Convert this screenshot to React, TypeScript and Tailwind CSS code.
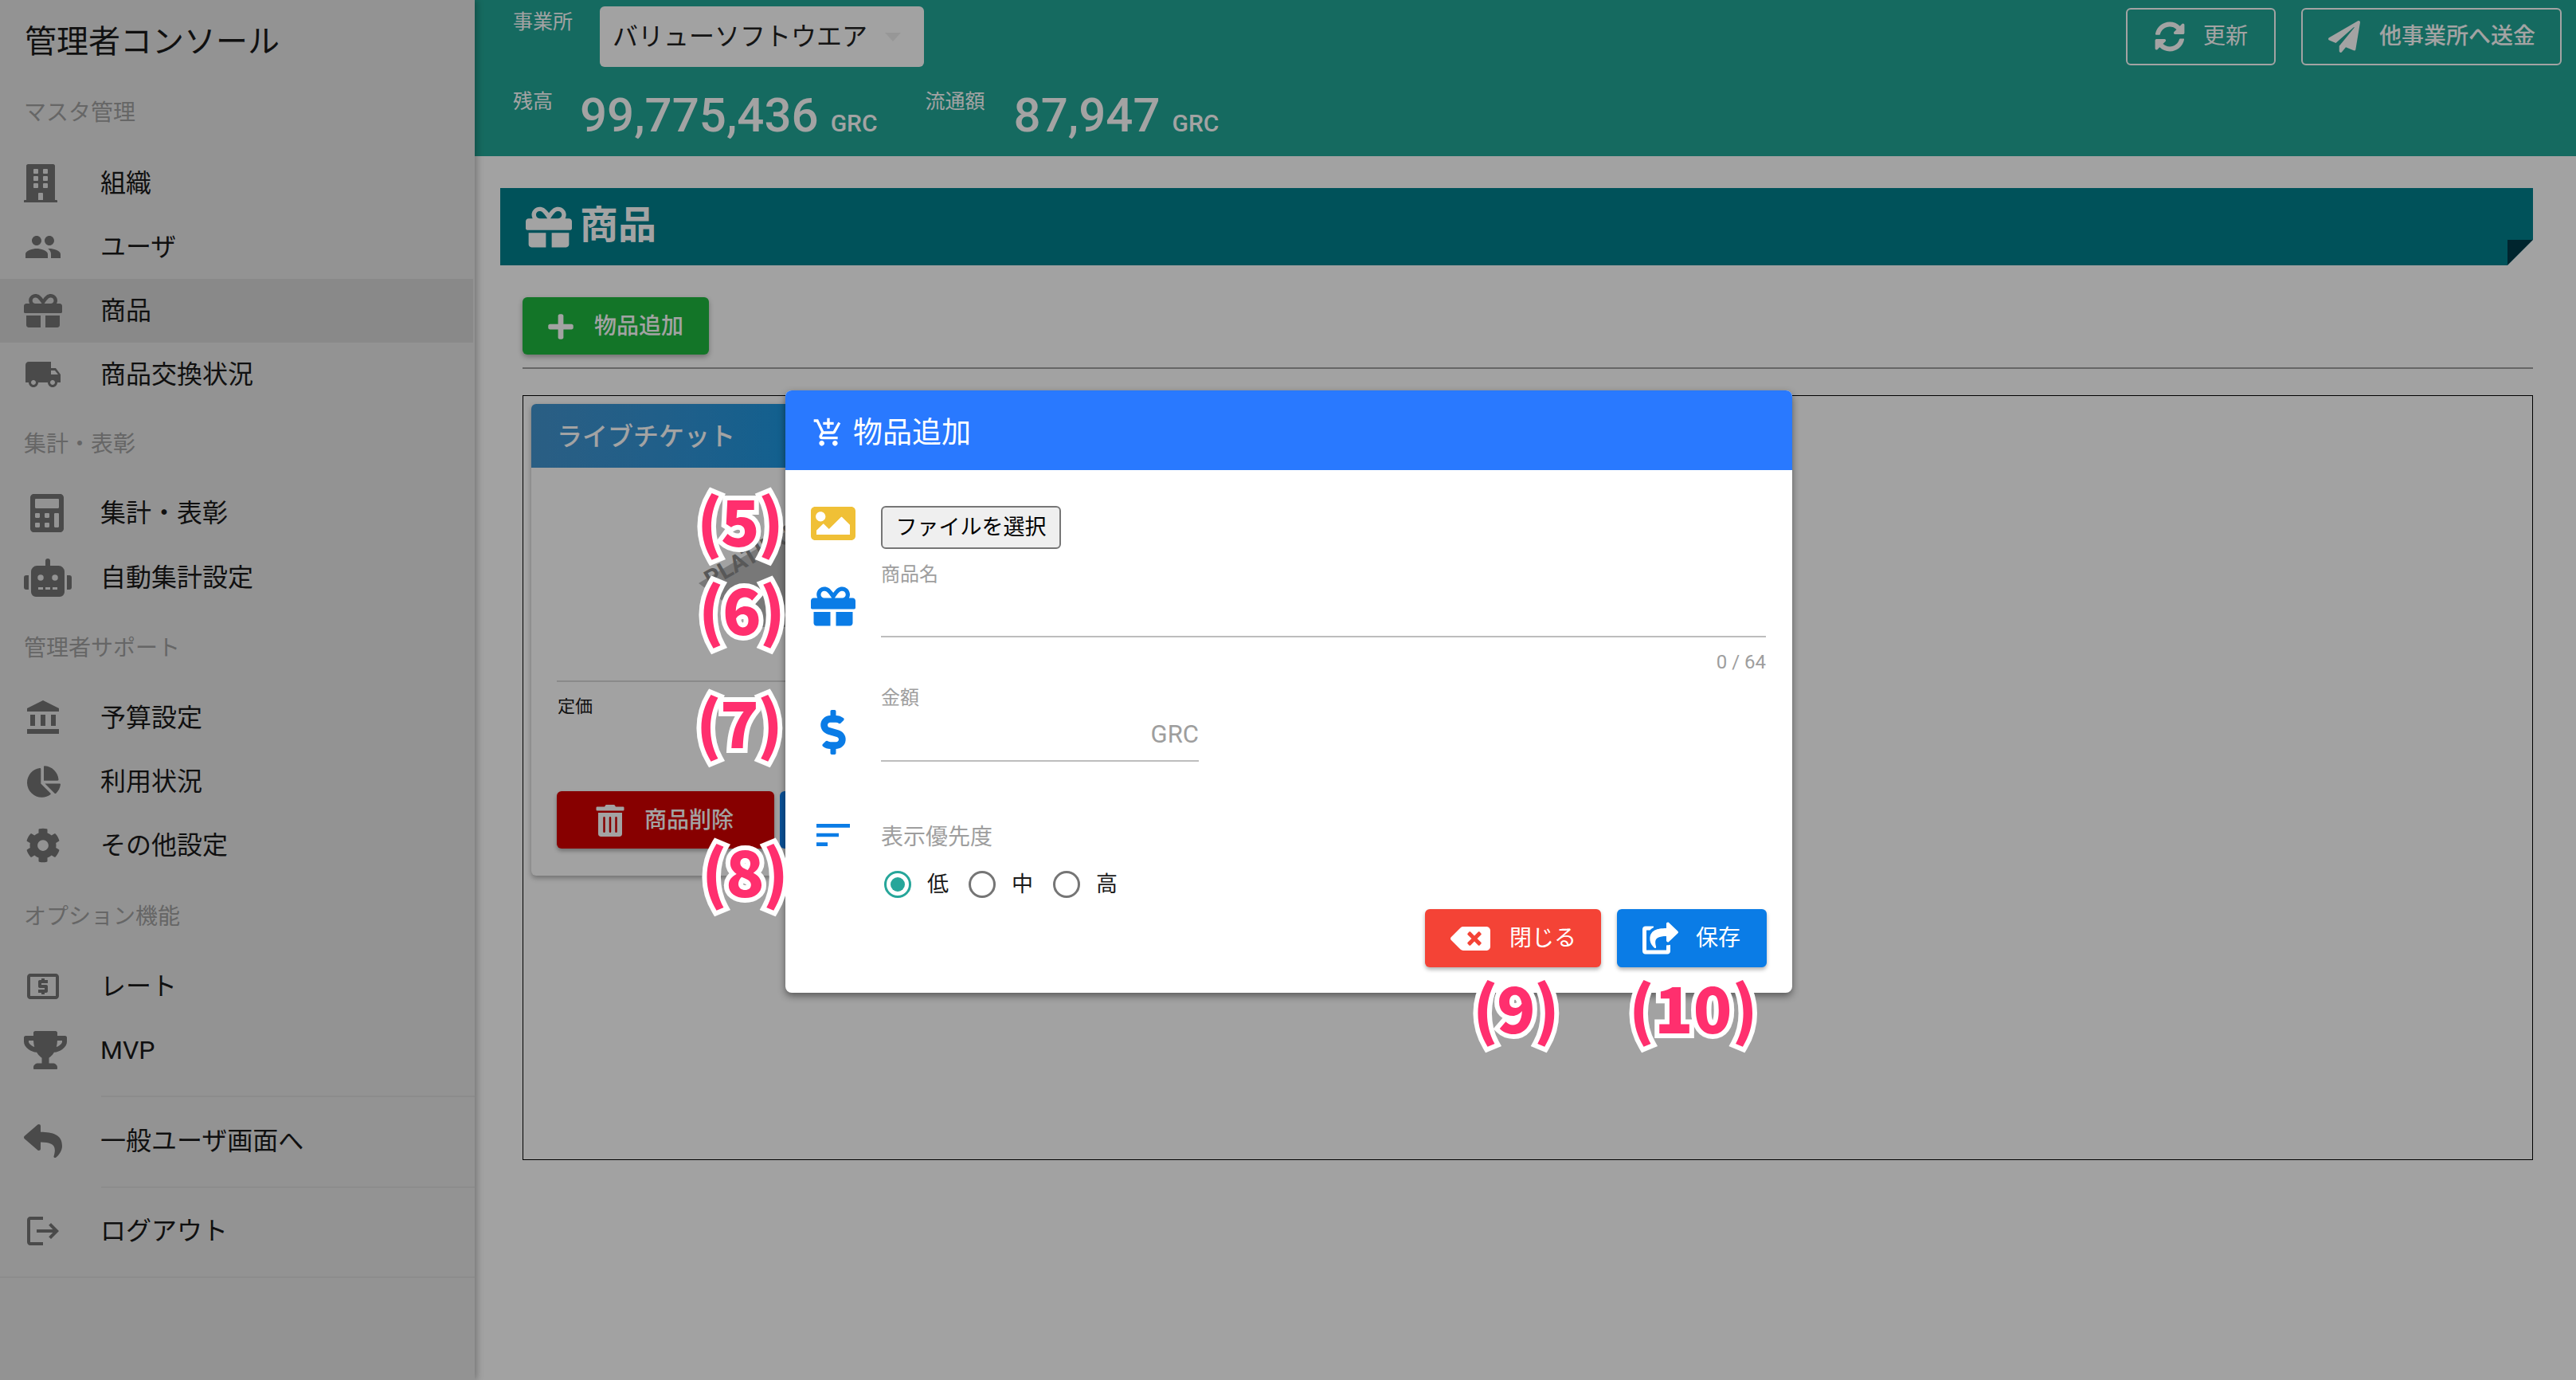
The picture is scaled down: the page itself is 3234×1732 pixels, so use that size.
import type { ReactNode } from "react";
import {
  FaBuilding, FaGift, FaCalculator, FaRobot, FaChartPie, FaCog, FaTrophy, FaReply, FaSyncAlt,
  FaPaperPlane, FaPlus, FaTrashAlt, FaImage, FaDollarSign, FaShareSquare, FaBackspace,
} from "react-icons/fa";
import { MdPeople, MdLocalShipping, MdAccountBalance, MdLocalAtm, MdLogout, MdAddShoppingCart, MdSort } from "react-icons/md";

function NavItem({ icon, label, active, className = "h-[80px]" }: { icon: ReactNode; label: string; active?: boolean; className?: string }) {
  return (
    <div className={`flex items-center pl-[30px] text-[32px] leading-none text-[#1a1a1a] ${active ? "bg-[#d6d6d6] mr-[2px]" : ""} ${className}`}>
      <div className="w-[96px] shrink-0 text-[#747474]">{icon}</div>
      <span>{label}</span>
    </div>
  );
}

function SectionLabel({ children, className }: { children: string; className: string }) {
  return <div className={`flex items-center pl-[30px] pt-[2px] text-[28px] leading-none text-[#a0a0a0] ${className}`}>{children}</div>;
}

function Sidebar() {
  return (
    <aside className="w-[596px] shrink-0 bg-[#e6e6e6] relative z-10 shadow-[3px_0_8px_rgba(0,0,0,0.25)]">
      <div className="h-[92px] flex items-center pl-[31px] pt-[14px] text-[40px] leading-none text-[#1a1a1a]">管理者コンソール</div>
      <SectionLabel className="h-[98px]">マスタ管理</SectionLabel>
      <NavItem icon={<FaBuilding size={48} className="ml-[-3px]" />} label="組織" />
      <NavItem icon={<MdPeople size={48} />} label="ユーザ" />
      <NavItem icon={<FaGift size={48} />} label="商品" active />
      <NavItem icon={<MdLocalShipping size={48} />} label="商品交換状況" />
      <SectionLabel className="h-[94px]">集計・表彰</SectionLabel>
      <NavItem icon={<FaCalculator size={48} className="ml-[5px]" />} label="集計・表彰" />
      <NavItem icon={<FaRobot size={60} />} label="自動集計設定" className="h-[80px] pt-[2px]" />
      <SectionLabel className="h-[97px]">管理者サポート</SectionLabel>
      <NavItem icon={<MdAccountBalance size={48} />} label="予算設定" />
      <NavItem icon={<FaChartPie size={42} className="ml-[4px]" />} label="利用状況" />
      <NavItem icon={<FaCog size={44} className="ml-[2px]" />} label="その他設定" />
      <SectionLabel className="h-[97px]">オプション機能</SectionLabel>
      <NavItem icon={<MdLocalAtm size={48} />} label="レート" />
      <NavItem icon={<FaTrophy size={54} />} label="MVP" />
      <div className="ml-[127px] mt-[17px] border-t-2 border-[#dcdcdc]" />
      <NavItem icon={<FaReply size={48} />} label="一般ユーザ画面へ" className="h-[112px] pb-[3px]" />
      <div className="ml-[127px] border-t-2 border-[#dcdcdc]" />
      <NavItem icon={<MdLogout size={48} />} label="ログアウト" className="h-[111px] pb-[4px]" />
      <div className="border-t-2 border-[#dcdcdc]" />
    </aside>
  );
}

function Amount({ label, value, labelWidth }: { label: string; value: string; labelWidth: string }) {
  return (
    <div className="flex items-start text-white">
      <span className={`text-[25px] leading-none mt-[15px] ${labelWidth}`}>{label}</span>
      <span className="text-[60px] leading-[90px] font-medium">{value}</span>
      <span className="text-[30px] leading-none font-medium ml-[15px] mt-[40px]">GRC</span>
    </div>
  );
}

function HeaderBar() {
  return (
    <header className="h-[196px] bg-[#22a696] pl-[48px] pr-[18px] pt-[8px] shrink-0">
      <div className="flex items-start">
        <span className="text-[25px] leading-none text-white mt-[7px] w-[109px]">事業所</span>
        <div className="w-[407px] h-[76px] bg-[#fefefe] rounded-[6px] flex items-center pl-[16px] text-[32px] leading-none text-[#222]">
          バリューソフトウエア
          <span className="ml-[22px] border-x-[10px] border-t-[11px] border-x-transparent border-t-[#ececec]" />
        </div>
        <div className="ml-auto flex items-center gap-[32px] mt-[2px]">
          <button className="w-[188px] h-[72px] border-2 border-white rounded-[6px] flex items-center pl-[34px] text-white text-[28px] leading-none">
            <FaSyncAlt size={38} />
            <span className="ml-[23px]">更新</span>
          </button>
          <button className="w-[327px] h-[72px] border-2 border-white rounded-[6px] flex items-center pl-[32px] text-white text-[28px] leading-none font-medium">
            <FaPaperPlane size={40} />
            <span className="ml-[24px]">他事業所へ送金</span>
          </button>
        </div>
      </div>
      <div className="flex items-start mt-[16px]">
        <Amount label="残高" value="99,775,436" labelWidth="w-[84px]" />
        <div className="ml-[60px]">
          <Amount label="流通額" value="87,947" labelWidth="w-[111px]" />
        </div>
      </div>
    </header>
  );
}

function ProductCard() {
  return (
    <div className="w-[580px] h-[592px] ml-[10px] mt-[10px] bg-[#fdfdfd] rounded-[6px] shadow-[0_3px_6px_rgba(0,0,0,0.3)]">
      <div className="h-[80px] rounded-t-[6px] bg-gradient-to-r from-[#4294ce] to-[#1796e1] to-60% flex items-center pl-[32px] pt-[2px] text-[32px] leading-none font-medium text-white">
        ライブチケット
      </div>
      <div className="h-[267px] relative overflow-hidden">
        <svg className="absolute left-[180px] top-[60px]" width="320" height="200" viewBox="0 0 320 200">
          <polygon points="30,85 140,20 320,60 320,140 105,140" fill="#bcbcbc" />
          <text x="45" y="91" transform="rotate(-30 45 91)" fontSize="30" fontWeight="700" fill="#8a8a8a" fontFamily="Roboto, sans-serif">PLATINUM</text>
        </svg>
      </div>
      <div className="mx-[32px] border-t-2 border-[#d8d8d8]" />
      <div className="pl-[33px] mt-[20px] text-[22px] leading-none text-[#1a1a1a]">定価</div>
      <div className="flex gap-[7px] ml-[32px] mt-[95px]">
        <button className="w-[273px] h-[72px] bg-[#d40000] rounded-[6px] flex items-center pl-[47px] pt-[2px] text-white text-[28px] leading-none font-medium shadow-[0_3px_5px_rgba(0,0,0,0.3)]">
          <FaTrashAlt size={40} />
          <span className="ml-[23px]">商品削除</span>
        </button>
        <button className="w-[240px] h-[72px] bg-[#1080f0] rounded-[6px]" />
      </div>
    </div>
  );
}

function Radio({ label, checked }: { label: string; checked?: boolean }) {
  return (
    <div className="flex items-center w-[106px]">
      <span className={`w-[34px] h-[34px] rounded-full border-[3px] flex items-center justify-center ${checked ? "border-[#26a69a]" : "border-[#757575]"}`}>
        {checked && <span className="w-[18px] h-[18px] rounded-full bg-[#26a69a]" />}
      </span>
      <span className="ml-[20px] text-[27px] leading-none text-[#1a1a1a]">{label}</span>
    </div>
  );
}

function Modal() {
  return (
    <div className="absolute left-[986px] top-[490px] w-[1264px] h-[756px] bg-white rounded-[8px] shadow-[0_4px_10px_rgba(0,0,0,0.45)] overflow-hidden">
      <div className="h-[100px] bg-[#2979ff] flex items-center pl-[34px] pt-[6px] text-white text-[37px] leading-none">
        <MdAddShoppingCart size={40} />
        <span className="ml-[11px]">物品追加</span>
      </div>
      <div className="flex pl-[32px] pr-[33px] pt-[45px]">
        <FaImage size={56} className="text-[#f0c036] shrink-0 mt-[-6px]" />
        <button className="ml-[32px] w-[226px] h-[54px] bg-[#efefef] border-2 border-[#767676] rounded-[6px] text-[27px] leading-none text-black">
          ファイルを選択
        </button>
      </div>
      <div className="flex pl-[32px] pr-[33px] mt-[20px]">
        <FaGift size={56} className="text-[#0a7ce6] shrink-0 mt-[24px]" />
        <div className="ml-[32px] flex-1">
          <div className="text-[24px] leading-none text-[#9e9e9e]">商品名</div>
          <div className="h-[67px] border-b-2 border-[#bdbdbd]" />
          <div className="text-[24px] leading-none text-[#9e9e9e] text-right mt-[19px]">0 / 64</div>
        </div>
      </div>
      <div className="flex pl-[32px] pr-[33px] mt-[21px]">
        <FaDollarSign size={56} className="text-[#0a7ce6] shrink-0 mt-[27px]" />
        <div className="ml-[32px]">
          <div className="text-[24px] leading-none text-[#9e9e9e]">金額</div>
          <div className="w-[399px] h-[68px] border-b-2 border-[#bdbdbd] flex items-center justify-end text-[31px] leading-none text-[#9e9e9e]">GRC</div>
        </div>
      </div>
      <div className="flex pl-[32px] mt-[81px]">
        <MdSort size={56} className="text-[#0a7ce6] shrink-0 mt-[-17px]" />
        <div className="ml-[32px]">
          <div className="text-[28px] leading-none text-[#9e9e9e]">表示優先度</div>
          <div className="flex mt-[28px] ml-[4px]">
            <Radio label="低" checked />
            <Radio label="中" />
            <Radio label="高" />
          </div>
        </div>
      </div>
      <div className="absolute right-[32px] bottom-[32px] flex gap-[20px]">
        <button className="w-[221px] h-[73px] bg-[#f44336] rounded-[6px] flex items-center pl-[32px] text-white text-[28px] leading-none shadow-[0_3px_5px_rgba(0,0,0,0.3)]">
          <FaBackspace size={50} />
          <span className="ml-[24px]">閉じる</span>
        </button>
        <button className="w-[188px] h-[73px] bg-[#0a7ce6] rounded-[6px] flex items-center pl-[32px] text-white text-[28px] leading-none shadow-[0_3px_5px_rgba(0,0,0,0.3)]">
          <FaShareSquare size={45} />
          <span className="ml-[22px]">保存</span>
        </button>
      </div>
    </div>
  );
}

const MARKS = [
  { text: "(5)", className: "left-[875px] top-[609px]" },
  { text: "(6)", className: "left-[877px] top-[720px]" },
  { text: "(7)", className: "left-[874px] top-[862px]" },
  { text: "(8)", className: "left-[881px] top-[1049px]" },
  { text: "(9)", className: "left-[1849px] top-[1220px]" },
  { text: "(10)", className: "left-[2045px] top-[1220px] tracking-[0px]" },
];

export default function App() {
  return (
    <div className="relative w-[3234px] h-[1732px] overflow-hidden flex bg-[#fdfdfd] [font-family:Roboto,'Noto_Sans_CJK_JP',sans-serif]">
      <Sidebar />
      <main className="flex-1 min-w-0 flex flex-col">
        <HeaderBar />
        <div className="pl-[32px] pr-[54px] pt-[40px]">
          <div className="relative h-[97px] bg-[#00808d] flex items-center pl-[32px] text-white text-[48px] leading-none font-bold">
            <FaGift size={58} />
            <span className="ml-[10px] mt-[-3px]">商品</span>
            <span className="absolute right-0 bottom-0 w-[32px] h-[32px] bg-[#003a48] [clip-path:polygon(0_0,100%_0,0_100%)]" />
            <span className="absolute right-0 bottom-0 w-[32px] h-[32px] bg-[#fdfdfd] [clip-path:polygon(100%_0,100%_100%,0_100%)]" />
          </div>
          <div className="pl-[28px]">
            <button className="mt-[40px] w-[234px] h-[72px] bg-[#1eb83f] rounded-[6px] flex items-center pl-[30px] pt-[2px] text-white text-[28px] leading-none font-medium shadow-[0_3px_6px_rgba(0,0,0,0.3)]">
              <FaPlus size={36} />
              <span className="ml-[24px]">物品追加</span>
            </button>
            <div className="mt-[16px] border-t-2 border-[#a0a0a0]" />
            <div className="mt-[33px] h-[960px] border border-black overflow-hidden">
              <ProductCard />
            </div>
          </div>
        </div>
      </main>
      <div className="absolute inset-0 z-20 bg-[rgba(0,0,0,0.36)]" />
      <div className="absolute inset-0 z-30">
        <Modal />
        {MARKS.map((m) => (
          <span
            key={m.text}
            className={`absolute text-[80px] leading-[85px] font-black tracking-[-2px] text-[#ff2f6e] [font-family:'Noto_Sans_CJK_JP',sans-serif] [-webkit-text-stroke:12px_white] [paint-order:stroke_fill] ${m.className}`}
          >
            {m.text}
          </span>
        ))}
      </div>
    </div>
  );
}
